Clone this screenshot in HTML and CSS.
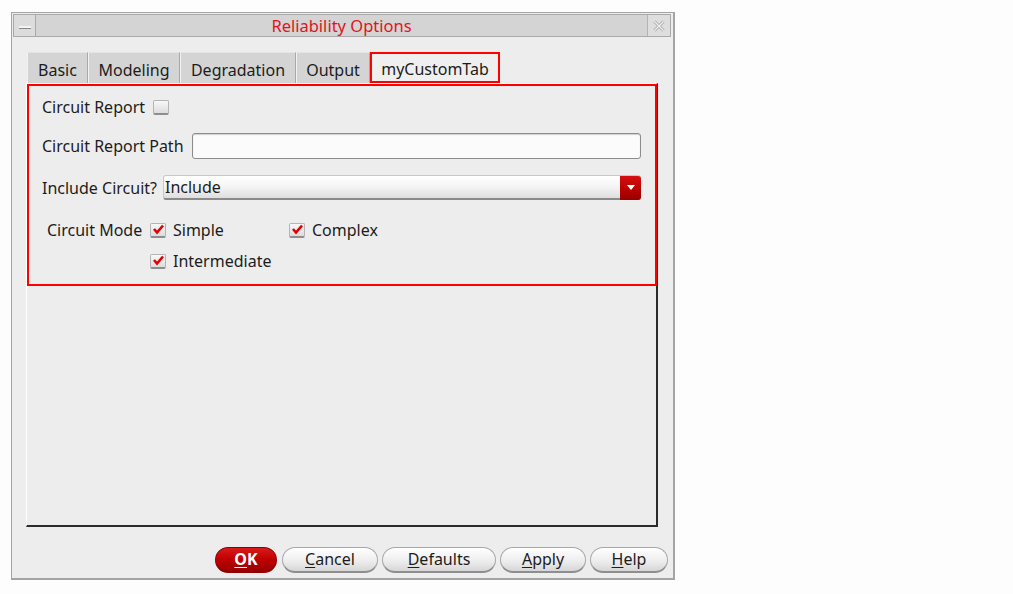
FILE: index.html
```html
<html>
  <head>
    <meta name="viewport" content="width=device-width, initial-scale=1.0">
    <link rel="stylesheet" href="styles.css">
  </head>
  <body>
    <div class="window">
      <div class="titlebar">
        <div class="tbButton minimize"><span class="dash"></span></div>
        <div class="title">Reliability Options</div>
        <div class="tbButton close">
          <svg width="14" height="14" viewBox="0 0 14 14">
            <path d="M2.5 2.5 L11.5 11.5 M11.5 2.5 L2.5 11.5" stroke="#a8a8a8" stroke-width="3" fill="none"/>
            <path d="M2.5 2.5 L11.5 11.5 M11.5 2.5 L2.5 11.5" stroke="#f2f2f2" stroke-width="1.2" fill="none"/>
          </svg>
        </div>
      </div>

      <div class="tabs">
        <div class="tab" style="width: 61px;">Basic</div>
        <div class="tab" style="width: 92px;">Modeling</div>
        <div class="tab" style="width: 116px;">Degradation</div>
        <div class="tab" style="width: 74px;">Output</div>
        <div class="tab active" style="width: 130px;">myCustomTab</div>
      </div>

      <div class="pane">
        <div class="custom">
          <div class="row rowReport">
            <label>Circuit Report</label>
            <span class="check"></span>
          </div>
          <div class="row rowPath">
            <label>Circuit Report Path</label>
            <input class="textbox" type="text">
          </div>
          <div class="row rowInclude">
            <label>Include Circuit?</label>
            <div class="combo">
              <span class="comboText">Include</span>
              <div class="dropButton">
                <svg width="8" height="6" viewBox="0 0 8 6"><path d="M0 0 L8 0 L4 5 Z" fill="#fff"/></svg>
              </div>
            </div>
          </div>
          <div class="modeGrid">
            <label class="modeLabel">Circuit Mode</label>
            <div class="option"><span class="check checked"><svg width="13" height="11" viewBox="0 0 13 11"><path d="M2 5 L5 8.5 L11 1.5" stroke="#e00000" stroke-width="2.6" fill="none"/></svg></span>Simple</div>
            <div class="option"><span class="check checked"><svg width="13" height="11" viewBox="0 0 13 11"><path d="M2 5 L5 8.5 L11 1.5" stroke="#e00000" stroke-width="2.6" fill="none"/></svg></span>Complex</div>
            <div></div>
            <div class="option"><span class="check checked"><svg width="13" height="11" viewBox="0 0 13 11"><path d="M2 5 L5 8.5 L11 1.5" stroke="#e00000" stroke-width="2.6" fill="none"/></svg></span>Intermediate</div>
          </div>
        </div>
      </div>

      <div class="buttons">
        <div class="button ok" style="width: 62px;"><u>O</u>K</div>
        <div class="button" style="width: 96px;"><u>C</u>ancel</div>
        <div class="button" style="width: 114px;"><u>D</u>efaults</div>
        <div class="button" style="width: 86px;"><u>A</u>pply</div>
        <div class="button" style="width: 78px;"><u>H</u>elp</div>
      </div>
    </div>
  </body>
</html>
```

FILE: styles.css
```css
body {
  margin: 0;
  background-color: #fdfdfd;
  font-family: "Noto Sans", "DejaVu Sans", sans-serif;
  font-size: 16px;
  color: #1c1c1c;
}
.window {
  margin: 12px 0 0 11px;
  width: 659px;
  height: 564px;
  border: 1px solid #a4a4a4;
  border-right-width: 2px;
  border-bottom-width: 2px;
  background-color: #ededed;
  padding: 1px 1px 0 1px;
  box-sizing: content-box;
  display: flex;
  flex-direction: column;
}
.titlebar {
  height: 23px;
  box-sizing: border-box;
  margin-right: 1px;
  display: flex;
  align-items: center;
  background-color: #d4d4d4;
  border: 1px solid #a9a9a9;
}
.tbButton {
  width: 22px; height: 21px;
  box-sizing: border-box;
  display: flex;
  align-items: center;
  justify-content: center;
  background-color: #dcdcdc;
}
.minimize {
  border-right: 1px solid #a9a9a9;
  align-items: flex-end;
  padding-bottom: 7px;
}
.dash {
  width: 12px; height: 2px;
  background-color: #f4f4f4;
  border-bottom: 1px solid #888;
}
.close {
  border-left: 1px solid #b4b4b4;
  width: 23px;
  background-color: #dedede;
}
.title {
  flex: 1;
  text-align: center;
  color: #e0141c;
  font-size: 16.5px;
  line-height: 21px;
}
.tabs {
  display: flex;
  margin: 15px 0 0 14px;
  height: 31px;
}
.tab {
  box-sizing: border-box;
  height: 31px;
  padding-top: 6px;
  text-align: center;
  background-color: #d4d4d4;
  border-top: 1px solid #e4e4e4;
  border-left: 1px solid #f2f2f2;
  border-right: 1px solid #a8a8a8;
}
.tab.active {
  background-color: #efefef;
  border: 2px solid #ff0000;
  padding-top: 4px;
}
.pane {
  margin: 0 14px 0 13px;
  height: 444px;
  box-sizing: border-box;
  border-top: 1px solid #f8f8f8;
  border-left: 1px solid #ffffff;
  border-right: 2px solid #2b2b2b;
  border-bottom: 2px solid #2b2b2b;
}
.custom {
  margin-right: -1px;
  height: 202px;
  box-sizing: border-box;
  border: 2px solid #ff0000;
  padding: 10px 14px 0 13px;
}
.row {
  display: flex;
  align-items: center;
}
.row label {
  margin-right: 8px;
}
.rowReport {
  height: 22px;
}
.rowPath {
  margin-top: 15px;
  height: 26px;
}
.rowInclude {
  margin-top: 16px;
  height: 25px;
}
.rowInclude label {
  margin-right: 6px;
}
.check {
  display: inline-flex;
  align-items: center;
  justify-content: center;
  width: 16px; height: 15px;
  box-sizing: border-box;
  border: 1px solid #b4b4b4;
  border-bottom: 2px solid #8e8e8e;
  border-radius: 2px;
  background: linear-gradient(#f8f8f8, #dcdcdc);
}
.textbox {
  flex: 1;
  height: 26px;
  box-sizing: border-box;
  border: 1px solid #8c8c8c;
  border-radius: 3px;
  background-color: #fbfbfb;
  box-shadow: inset 0 1px 1px #d0d0d0;
  margin-left: 0;
}
.combo {
  flex: 1;
  height: 25px;
  box-sizing: border-box;
  display: flex;
  align-items: center;
  border: 1px solid #c8c8c8;
  border-bottom: 2px solid #8a8a8a;
  border-radius: 3px;
  background: linear-gradient(#ffffff, #f4f4f4 50%, #dedede);
}
.comboText {
  flex: 1;
  padding-left: 1px;
}
.dropButton {
  width: 21px;
  height: 24px;
  margin: -1px -1px -2px 0;
  display: flex;
  align-items: center;
  justify-content: center;
  border-radius: 0 3px 3px 0;
  background: linear-gradient(#d41010, #b80000 60%, #960000);
}
.modeGrid {
  margin-top: 20px;
  display: grid;
  grid-template-columns: 108px 139px auto;
  grid-auto-rows: 20px;
  row-gap: 11px;
  align-items: center;
}
.modeLabel {
  padding-left: 5px;
}
.option {
  display: flex;
  align-items: center;
}
.option .check {
  margin-right: 7px;
}
.buttons {
  display: flex;
  justify-content: flex-end;
  gap: 4px;
  margin-top: 20px;
  padding-right: 4px;
}
.button {
  height: 26px;
  box-sizing: border-box;
  border: 1px solid #a8a8a8;
  border-bottom: 2px solid #8e8e8e;
  border-radius: 13px;
  background: linear-gradient(#ffffff, #ececec 60%, #d6d6d6);
  text-align: center;
  line-height: 23px;
}
.button u {
  text-underline-offset: 2px;
}
.ok {
  margin-right: 1px;
  color: #ffffff;
  font-weight: bold;
  border-color: #900000;
  background: linear-gradient(#d81a1a, #c00000 50%, #9a0000);
}
```
